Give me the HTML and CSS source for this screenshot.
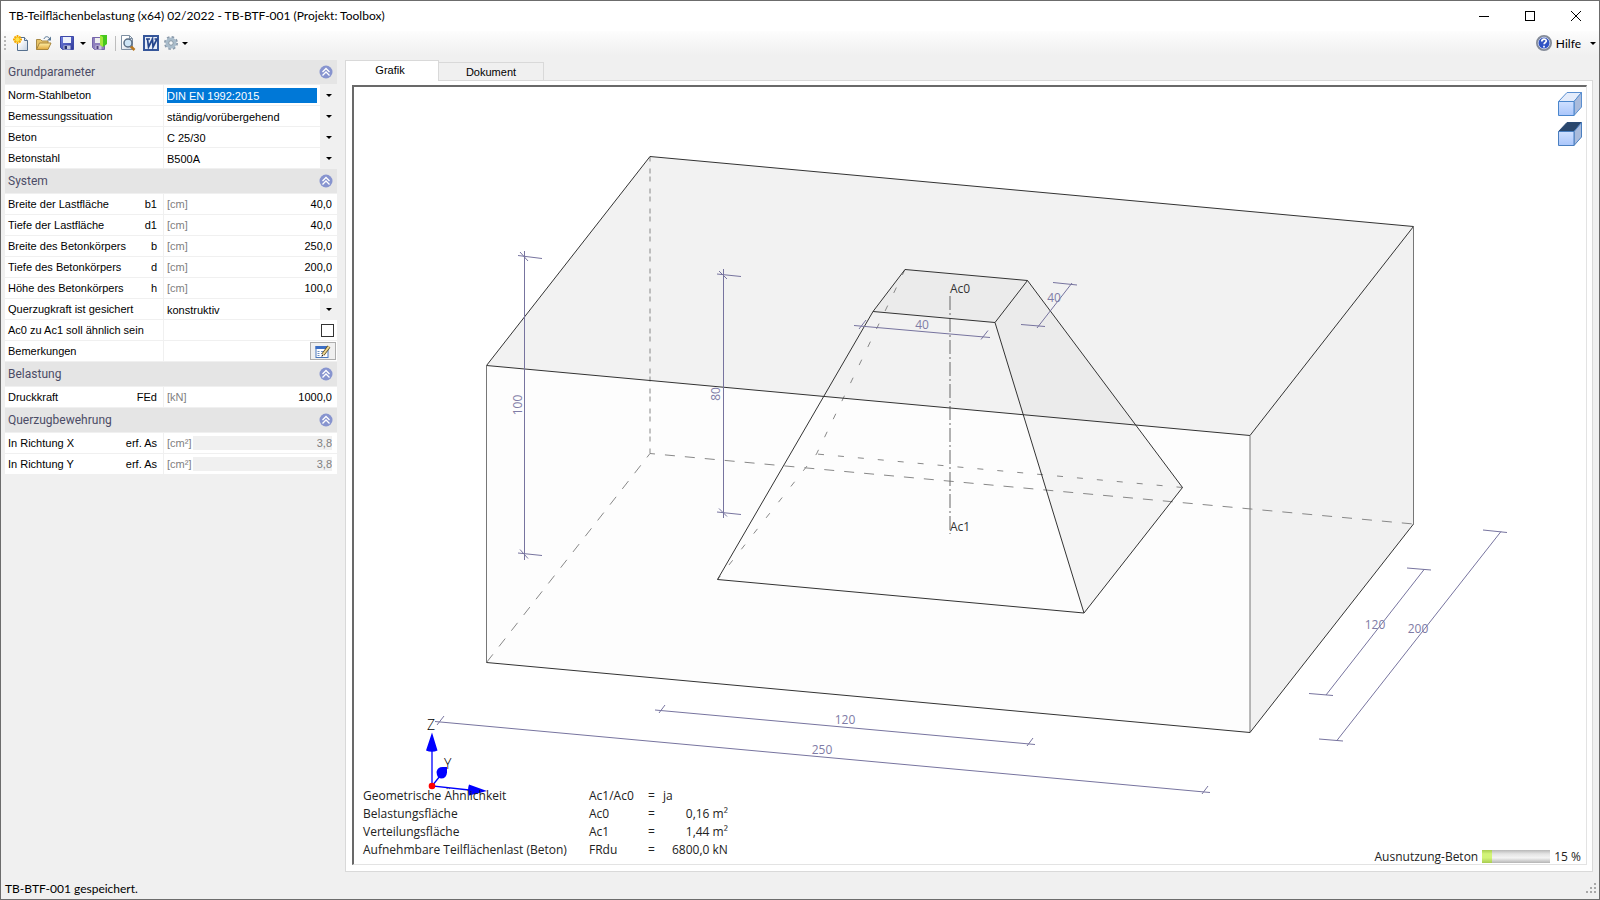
FILE: index.html
```
<!DOCTYPE html>
<html lang="de">

<head>
    <meta charset="UTF-8">
    <meta name="viewport" content="width=device-width, initial-scale=1.0">
    <title>TB-Teilflächenbelastung</title>
    <link rel="stylesheet" href="styles.css">
</head>

<body>
    <div class="window">
        <header class="titlebar">
            <h1 class="title">TB-Teilflächenbelastung (x64) 02/2022 - TB-BTF-001 (Projekt: Toolbox)</h1>
            <div class="window-buttons">
                <button class="window-button" aria-label="Minimieren">
                    <svg width="10" height="10" shape-rendering="crispEdges"><path d="M0 5.500h10" stroke="#000"/></svg>
                </button>
                <button class="window-button" aria-label="Maximieren">
                    <svg width="10" height="10" shape-rendering="crispEdges"><rect x=".5" y=".5" width="9" height="9" fill="none" stroke="#000"/></svg>
                </button>
                <button class="window-button" aria-label="Schließen">
                    <svg width="10" height="10"><path d="M0 0l10 10M10 0L0 10" stroke="#000"/></svg>
                </button>
            </div>
        </header>

        <nav class="toolbar">
            <span class="grip"></span>
            <button class="tool" aria-label="Neu">
                <svg width="16" height="16">
                    <defs>
                        <linearGradient id="page" x2="1" y2="1"><stop offset=".3" stop-color="#fff"/><stop offset="1" stop-color="#c3d0e0"/></linearGradient>
                    </defs>
                    <path d="M4.500 2.500h7l3 3v10h-10z" fill="url(#page)" stroke="#56708f"/>
                    <path d="M11.500 2.500v3h3" fill="#dfe8f2" stroke="#56708f"/>
                    <path d="M4.500 0v9M0 4.500h9M1.500 1.500l6 6M7.500 1.500l-6 6" stroke="#f5a800" stroke-width="1.800"/>
                    <circle cx="4.500" cy="4.500" r="2.200" fill="#ffe24a"/>
                </svg>
            </button>
            <button class="tool" aria-label="Öffnen">
                <svg width="17" height="16">
                    <defs>
                        <linearGradient id="folder" x2="0" y2="1"><stop offset="0" stop-color="#fff0a8"/><stop offset="1" stop-color="#e0a83c"/></linearGradient>
                    </defs>
                    <path d="M1.500 14.500v-10h4l1.500 1.500h6v2" fill="#e8c468" stroke="#a88a45"/>
                    <path d="M1.500 14.500l3-6.500h11.500l-3 6.500z" fill="url(#folder)" stroke="#a8853a"/>
                    <path d="M9 4c1-3 4-3 5.500-.500" fill="none" stroke="#5a7896"/>
                    <path d="M16 1.500v4h-4z" fill="#5a7896"/>
                </svg>
            </button>
            <button class="tool" aria-label="Speichern">
                <svg width="14" height="16">
                    <defs>
                        <linearGradient id="disk" x2="1" y2="1"><stop offset="0" stop-color="#7384e4"/><stop offset="1" stop-color="#2c3596"/></linearGradient>
                    </defs>
                    <path d="M.5 1.500h13v13h-11l-2-2z" fill="url(#disk)" stroke="#3d48a8"/>
                    <path d="M3 2h8v6h-8z" fill="#eef2fb"/>
                    <path d="M3.500 10.500h7v4h-7z" fill="#c4cbe0"/>
                    <path d="M4.500 11h2.500v3h-2.500z" fill="#26306e"/>
                </svg>
            </button>
            <button class="tool-arrow" aria-label="Speichern, weitere"><span class="arrow"></span></button>
            <button class="tool" aria-label="Speichern und schließen">
                <svg width="15" height="16">
                    <path d="M.5 2.500h12v12h-10l-2-2z" fill="#8f80bd" stroke="#7565aa"/>
                    <path d="M3 3h7v5h-7z" fill="#eee"/>
                    <path d="M3.500 10.500h6v4h-6z" fill="#ccc6df"/>
                    <path d="M4.500 11h2v3h-2z" fill="#50407e"/>
                    <path d="M8 0h7v9l-4 3-1-2H8z" fill="#46c81e"/>
                    <path d="M8 0l3 2v10l-3-2z" fill="#a4e83c"/>
                </svg>
            </button>
            <span class="separator"></span>
            <button class="tool" aria-label="Vorschau">
                <svg width="16" height="16">
                    <path d="M1.500.5h8l3 3v11h-11z" fill="url(#page)" stroke="#7f90a3"/>
                    <path d="M9.500.5v3h3" fill="none" stroke="#7f90a3"/>
                    <path d="M10.500 11l4 4" stroke="#b87820" stroke-width="2.500"/>
                    <circle cx="8" cy="8" r="4" fill="#cfe6f7" stroke="#5b6f86" stroke-width="1.500"/>
                </svg>
            </button>
            <button class="tool" aria-label="Word">
                <svg width="16" height="16">
                    <rect x="1" y="1" width="14" height="14" fill="#e8eef8" stroke="#35569a" stroke-width="2"/>
                    <path d="M3 4h4M8.500 4h1.500M11.500 4h3M4.500 4l1 8 4-8 .5 8 4-8" fill="none" stroke="#24458c" stroke-width="1.700"/>
                </svg>
            </button>
            <button class="tool compact" aria-label="Einstellungen">
                <svg width="14" height="16">
                    <circle cx="7" cy="8" r="6" fill="none" stroke="#8a9aab" stroke-width="2" stroke-dasharray="2.500 2.200"/>
                    <circle cx="7" cy="8" r="4" fill="none" stroke="#a9bccb" stroke-width="3"/>
                    <circle cx="7" cy="8" r="2.300" fill="#f3f6f8" stroke="#7d909f"/>
                </svg>
            </button>
            <button class="tool-arrow" aria-label="Einstellungen, weitere"><span class="arrow"></span></button>
            <button class="help">
                <svg width="16" height="16">
                    <defs>
                        <linearGradient id="ball" x2="0" y2="1"><stop offset="0" stop-color="#3455b8"/><stop offset="1" stop-color="#2a50cc"/></linearGradient>
                    </defs>
                    <circle cx="8" cy="8" r="7" fill="url(#ball)" stroke="#848b98" stroke-width="2"/>
                    <circle cx="8" cy="8" r="5.800" fill="none" stroke="#d4dcf0" stroke-width=".8"/>
                    <path d="M5.800 6.500c0-3 4.500-3 4.500-.5 0 1.500-2.200 1.500-2.200 3.300M8 10.800v1.700" fill="none" stroke="#fff" stroke-width="1.700"/>
                </svg>
                Hilfe
                <span class="arrow"></span>
            </button>
        </nav>

        <div class="content">
            <form class="params">
                <section class="group">
                    <h2 class="group-title">Grundparameter
                        <button type="button" class="collapse" aria-label="Einklappen"><svg width="14" height="14"><use href="#chevrons"/></svg></button>
                    </h2>
                    <div class="row">
                        <label class="name" for="norm">Norm-Stahlbeton</label>
                        <div class="value"><select id="norm" class="combo selected"><option>DIN EN 1992:2015</option></select><span class="drop"><span class="arrow"></span></span></div>
                    </div>
                    <div class="row">
                        <label class="name" for="situation">Bemessungssituation</label>
                        <div class="value"><select id="situation" class="combo"><option>ständig/vorübergehend</option></select><span class="drop"><span class="arrow"></span></span></div>
                    </div>
                    <div class="row">
                        <label class="name" for="beton">Beton</label>
                        <div class="value"><select id="beton" class="combo"><option>C 25/30</option></select><span class="drop"><span class="arrow"></span></span></div>
                    </div>
                    <div class="row">
                        <label class="name" for="stahl">Betonstahl</label>
                        <div class="value"><select id="stahl" class="combo"><option>B500A</option></select><span class="drop"><span class="arrow"></span></span></div>
                    </div>
                </section>

                <section class="group">
                    <h2 class="group-title">System
                        <button type="button" class="collapse" aria-label="Einklappen"><svg width="14" height="14"><use href="#chevrons"/></svg></button>
                    </h2>
                    <div class="row">
                        <label class="name" for="b1">Breite der Lastfläche <span>b1</span></label>
                        <div class="value"><span class="unit">[cm]</span><input id="b1" class="number" value="40,0"></div>
                    </div>
                    <div class="row">
                        <label class="name" for="d1">Tiefe der Lastfläche <span>d1</span></label>
                        <div class="value"><span class="unit">[cm]</span><input id="d1" class="number" value="40,0"></div>
                    </div>
                    <div class="row">
                        <label class="name" for="b">Breite des Betonkörpers <span>b</span></label>
                        <div class="value"><span class="unit">[cm]</span><input id="b" class="number" value="250,0"></div>
                    </div>
                    <div class="row">
                        <label class="name" for="d">Tiefe des Betonkörpers <span>d</span></label>
                        <div class="value"><span class="unit">[cm]</span><input id="d" class="number" value="200,0"></div>
                    </div>
                    <div class="row">
                        <label class="name" for="h">Höhe des Betonkörpers <span>h</span></label>
                        <div class="value"><span class="unit">[cm]</span><input id="h" class="number" value="100,0"></div>
                    </div>
                    <div class="row">
                        <label class="name" for="querzug">Querzugkraft ist gesichert</label>
                        <div class="value"><select id="querzug" class="combo"><option>konstruktiv</option></select><span class="drop"><span class="arrow"></span></span></div>
                    </div>
                    <div class="row">
                        <label class="name" for="similar">Ac0 zu Ac1 soll ähnlich sein</label>
                        <div class="value"><input id="similar" type="checkbox" class="check"></div>
                    </div>
                    <div class="row">
                        <label class="name" for="notes">Bemerkungen</label>
                        <div class="value">
                            <button type="button" id="notes" class="notes" aria-label="Bemerkungen bearbeiten">
                                <svg width="16" height="13">
                                    <rect x="1" y="1.500" width="12" height="11" fill="#fff" stroke="#4b78bd"/>
                                    <path d="M.5 1h13v3h-13z" fill="#3d6fc4"/>
                                    <path d="M2.500 6.500h2M2.500 8.500h2M2.500 10.500h2M6 6.500h3M6 8.500h2" stroke="#6f8fc0"/>
                                    <path d="M14 1.500l-6 8" stroke="#5b4a20" stroke-width="3.500"/>
                                    <path d="M14 1.500l-6 8" stroke="#f0d890" stroke-width="2"/>
                                    <path d="M8.500 10.500l-2 1.500.5-2.500z" fill="#222"/>
                                </svg>
                            </button>
                        </div>
                    </div>
                </section>

                <section class="group">
                    <h2 class="group-title">Belastung
                        <button type="button" class="collapse" aria-label="Einklappen"><svg width="14" height="14"><use href="#chevrons"/></svg></button>
                    </h2>
                    <div class="row">
                        <label class="name" for="fed">Druckkraft <span>FEd</span></label>
                        <div class="value"><span class="unit">[kN]</span><input id="fed" class="number" value="1000,0"></div>
                    </div>
                </section>

                <section class="group">
                    <h2 class="group-title">Querzugbewehrung
                        <button type="button" class="collapse" aria-label="Einklappen"><svg width="14" height="14"><use href="#chevrons"/></svg></button>
                    </h2>
                    <div class="row">
                        <label class="name" for="asx">In Richtung X <span>erf. As</span></label>
                        <div class="value"><span class="unit">[cm²]</span><input id="asx" class="number readonly" value="3,8" readonly></div>
                    </div>
                    <div class="row">
                        <label class="name" for="asy">In Richtung Y <span>erf. As</span></label>
                        <div class="value"><span class="unit">[cm²]</span><input id="asy" class="number readonly" value="3,8" readonly></div>
                    </div>
                </section>
            </form>

            <main class="main">
                <div class="tabs" role="tablist">
                    <button class="tab active" role="tab" aria-selected="true">Grafik</button>
                    <button class="tab" role="tab" aria-selected="false">Dokument</button>
                </div>
                <div class="panel">
                    <div class="canvas">
                        <svg class="drawing" viewBox="354 87 1232 777">
                            <defs>
                                <symbol id="chevrons" viewBox="0 0 14 14">
                                    <circle cx="7" cy="7" r="6.500" fill="#8794cf"/>
                                    <path d="M3.500 7L7 3.500 10.500 7M3.500 10.500L7 7l3.500 3.500" fill="none" stroke="#fff" stroke-width="1.300"/>
                                </symbol>
                            </defs>

                            <!-- concrete block -->
                            <path d="M486.500 365.500L1250 435.500V732.500L486.500 662.500z" fill="#fdfdfd"/>
                            <path d="M650 156.500L1413.500 226.500 1250 435.500 486.500 365.500z" fill="#f2f2f2"/>
                            <path d="M1413.500 226.500V524L1250 732.500V435.500z" fill="#f1f1f1"/>

                            <!-- load distribution body -->
                            <path d="M905 269.500L1027.500 280.500 995 322.500 873 311.500z" fill="#ebebeb"/>
                            <path d="M1027.500 280.500L1135 425 1024 415 995 322.500z" fill="#ebebeb"/>
                            <path d="M1135 425L1182.500 487.500 1084 613 1024 415z" fill="#f4f4f4"/>

                            <g class="hidden-edge">
                                <path d="M650 156.500V453.500" stroke-dasharray="5 3 5 7" stroke-dashoffset="8"/>
                                <path d="M650 453.500L1413.500 524M650 453.500L486.500 662.500" stroke-dasharray="10 10" stroke-dashoffset="5"/>
                                <path d="M1182.500 487.500L816.500 454M905 269.500L816.500 454L717.500 579.500" stroke-dasharray="6 14"/>
                                <path class="axis" d="M950 296V534" stroke-dasharray="14 3 2 3"/>
                            </g>

                            <g class="edge">
                                <path d="M650 156.500L1413.500 226.500 1250 435.500 486.500 365.500z"/>
                                <path class="upright" d="M486.500 365.500V662.500M1250 435.500V732.500M1413.500 226.500V524"/>
                                <path d="M486.500 662.500L1250 732.500 1413.500 524"/>
                                <path d="M905 269.500L1027.500 280.500 995 322.500 873 311.500z"/>
                                <path d="M873 311.500L717.500 579.500 1084 613 1182.500 487.500 1027.500 280.500M995 322.500L1084 613"/>
                            </g>

                            <g class="dimension">
                                <path d="M524.500 251V560M518 255.500L542 258.500M520 252l8 9M518 553L542 555.500M520 549.500l8 9"/>
                                <path d="M723.500 269V518M717 274L741 276.500M719 271l8 8M717 512L741 514.500M719 508.500l8 8"/>
                                <path d="M854 325.500L990 337.500M859 329l7-9M981 339.500l7-9"/>
                                <path d="M1037 328L1072 283M1021 324.500L1045 326.500M1053 282.500L1077 285"/>
                                <path d="M1424.500 569L1326 695M1407 568L1431 570M1309 693.500L1333 695.500"/>
                                <path d="M1501 531.500L1336.500 741M1483 530L1507 532.500M1319 739L1343 741"/>
                                <path d="M655 710L1035 744.500M659 713l6-8M1027 746l6-8"/>
                                <path d="M435 721.500L1210 792.500M437 725l7-9M1202 794l6-8"/>
                            </g>
                            <g class="dimension-text">
                                <text transform="translate(522 405) rotate(-90)">100</text>
                                <text transform="translate(720 394) rotate(-90)">80</text>
                                <text x="922" y="329">40</text>
                                <text x="1054" y="302">40</text>
                                <text x="1375" y="629">120</text>
                                <text x="1418" y="633">200</text>
                                <text x="845" y="724">120</text>
                                <text x="822" y="754">250</text>
                            </g>
                            <g class="label-text">
                                <text x="950" y="293">Ac0</text>
                                <text x="950" y="531">Ac1</text>
                            </g>
                            <g class="axis-text">
                                <text x="427" y="730">Z</text>
                                <text x="444" y="769">Y</text>
                            </g>

                            <!-- coordinate axes -->
                            <path d="M432 750V786L469 790M432 786L440 776" fill="none" stroke="#00f" stroke-width="1.300"/>
                            <path d="M432 732.500L437.500 750.500Q432 753 426 750.500zM487 791L469 795.500Q467 790 469 784.500z" fill="#00f"/>
                            <path d="M436.500 772q1-5 6-5h4.500v5.500q-.5 6-6 6-4 0-4.500-6.500z" fill="#00f"/>
                            <circle cx="432" cy="786" r="3.300" fill="#f00"/>
                        </svg>

                        <div class="views">
                            <button class="view" aria-label="3D-Ansicht">
                                <svg width="24" height="24">
                                    <defs>
                                        <linearGradient id="front" x2="0" y2="1"><stop offset="0" stop-color="#cfe0ff"/><stop offset="1" stop-color="#aac6fb"/></linearGradient>
                                    </defs>
                                    <path d="M.5 9.500L9 .5h14.500L16 9.500z" fill="#e4ecfb" stroke="#5a8fd0"/>
                                    <path d="M16 9.500L23.500.5V15L16 23.500z" fill="#a9bbdc" stroke="#5a8fd0"/>
                                    <path d="M.5 9.500H16v14H.5z" fill="url(#front)" stroke="#4a86cc"/>
                                </svg>
                            </button>
                            <button class="view" aria-label="Draufsicht">
                                <svg width="24" height="24">
                                    <path d="M.5 9.500L9 .5h14.500L16 9.500z" fill="#2a476c" stroke="#2a4a74"/>
                                    <path d="M16 9.500L23.500.5V15L16 23.500z" fill="#a9bbdc" stroke="#4a7fc0"/>
                                    <path d="M.5 9.500H16v14H.5z" fill="url(#front)" stroke="#4a7fc0"/>
                                </svg>
                            </button>
                        </div>

                        <table class="results">
                            <tr><td>Geometrische Ähnlichkeit</td><td>Ac1/Ac0</td><td>=</td><td class="answer">ja</td></tr>
                            <tr><td>Belastungsfläche</td><td>Ac0</td><td>=</td><td>0,16 m²</td></tr>
                            <tr><td>Verteilungsfläche</td><td>Ac1</td><td>=</td><td>1,44 m²</td></tr>
                            <tr><td>Aufnehmbare Teilflächenlast (Beton)</td><td>FRdu</td><td>=</td><td>6800,0 kN</td></tr>
                        </table>

                        <div class="usage">
                            <span id="usage-label">Ausnutzung-Beton</span>
                            <div class="bar" role="progressbar" aria-labelledby="usage-label" aria-valuenow="15"><div class="fill" style="width: 15%"></div></div>
                            <span>15 %</span>
                        </div>
                    </div>
                </div>
            </main>
        </div>

        <footer class="statusbar">
            <span>TB-BTF-001 gespeichert.</span>
            <svg width="11" height="11" fill="#a8a8a8" shape-rendering="crispEdges">
                <path d="M8 0h2v2h-2zM4 4h2v2h-2zM8 4h2v2h-2zM0 8h2v2h-2zM4 8h2v2h-2zM8 8h2v2h-2z"/>
            </svg>
        </footer>
    </div>
</body>

</html>
```
FILE: styles.css
```
* {
    box-sizing: border-box;
}

body {
    margin: 0;
    font-family: Lato, sans-serif;
    font-size: 12px;
    color: #000;
}

button,
input,
select {
    font: inherit;
    color: inherit;
    margin: 0;
    padding: 0;
    border: 0;
    background: none;
    border-radius: 0;
}

svg {
    display: block;
}

.window {
    display: flex;
    flex-direction: column;
    height: 100vh;
    background-color: #f0f0f0;
    border: 1px solid #6c6c6c;
}

/* title bar and toolbar */
.titlebar {
    display: flex;
    justify-content: space-between;
    height: 30px;
    background-color: #fff;
}

.title {
    margin: 0;
    padding-left: 8px;
    font-size: 12px;
    font-weight: 400;
    line-height: 30px;
}

.window-buttons {
    display: flex;
}

.window-button {
    display: flex;
    justify-content: center;
    align-items: center;
    width: 46px;
}

.toolbar {
    display: flex;
    align-items: center;
    height: 24px;
    padding-left: 3px;
    background: linear-gradient(#fdfdfd, #f0f0f0);
}

.grip {
    width: 2px;
    height: 15px;
    margin-right: 3px;
    background: repeating-linear-gradient(#b8b8b8 0 2px, transparent 2px 4px);
}

.tool {
    display: flex;
    justify-content: center;
    width: 23px;
}

.tool.compact {
    width: 18px;
}

.tool-arrow {
    display: flex;
    justify-content: center;
    width: 10px;
}

.arrow {
    border: 3px solid transparent;
    border-top-color: #000;
    border-bottom: 0;
}

.separator {
    width: 1px;
    height: 15px;
    margin-left: 4px;
    background-color: #bdbdbd;
}

.help {
    display: flex;
    align-items: center;
    gap: 4px;
    margin-left: auto;
    padding-right: 3px;
}

.help .arrow {
    margin-left: 5px;
}

/* parameter list */
.content {
    display: flex;
    flex: 1;
    gap: 8px;
    min-height: 0;
    padding: 5px 6px 0 4px;
}

.params {
    width: 332px;
    font-family: "Liberation Sans", Arial, sans-serif;
    font-size: 11px;
}

.group-title {
    display: flex;
    justify-content: space-between;
    align-items: center;
    height: 24px;
    margin: 0 0 1px;
    padding: 0 4px 0 3px;
    background-color: #e5e5e5;
    color: #4c4c66;
    font-family: Roboto, sans-serif;
    font-size: 12px;
    font-weight: 400;
}

.row {
    display: flex;
    gap: 1px;
    height: 20px;
    margin-bottom: 1px;
}

.name {
    display: flex;
    justify-content: space-between;
    align-items: center;
    width: 158px;
    padding: 0 6px 0 3px;
    background-color: #fff;
}

.value {
    display: flex;
    flex: 1;
    justify-content: flex-end;
    align-items: center;
    padding-left: 3px;
    background-color: #fff;
}

.combo {
    flex: 1;
    height: 15px;
    margin-right: 3px;
    padding-top: 1px;
    appearance: none;
    line-height: 14px;
}

.combo.selected {
    background-color: #0078d7;
    color: #fff;
}

.drop {
    display: flex;
    justify-content: center;
    align-items: center;
    width: 17px;
    height: 20px;
    background-color: #f0f0f0;
}

.unit {
    color: #808080;
}

.number {
    flex: 1;
    width: 0;
    height: 14px;
    margin: 0 5px 0 2px;
    text-align: right;
}

.number.readonly {
    background-color: #f0f0f0;
    color: #808080;
}

.check {
    width: 13px;
    height: 13px;
    margin-right: 3px;
    appearance: none;
    border: 1px solid #333;
}

.notes {
    display: flex;
    justify-content: center;
    align-items: center;
    width: 26px;
    height: 18px;
    margin-right: 1px;
    border: 1px solid #adadad;
    background-color: #f0f0f0;
}

/* drawing area */
.main {
    display: flex;
    flex: 1;
    flex-direction: column;
}

.tabs {
    display: flex;
    align-items: flex-end;
    height: 21px;
    margin-bottom: -1px;
    font-family: "Liberation Sans", Arial, sans-serif;
    font-size: 11px;
}

.tab {
    width: 105px;
    height: 19px;
    border: 1px solid #d9d9d9;
    border-left: 0;
}

.tab.active {
    position: relative;
    width: 94px;
    height: 21px;
    padding: 0 4px 2px 0;
    border-left: 1px solid #d9d9d9;
    border-bottom: 0;
    background-color: #fff;
}

.panel {
    display: flex;
    flex: 1;
    padding: 4px 5px 6px 6px;
    border: 1px solid #d9d9d9;
    background-color: #fff;
}

.canvas {
    position: relative;
    flex: 1;
    border: 2px solid #696969;
    border-right: 1px solid #e3e3e3;
    border-bottom: 1px solid #e3e3e3;
    color: #222;
    font-family: "Open Sans", sans-serif;
}

.drawing {
    position: absolute;
    width: 100%;
    height: 100%;
}

.edge {
    fill: none;
    stroke: #333;
}

.edge .upright {
    stroke: #777;
}

.hidden-edge {
    fill: none;
    stroke: #888;
}

.hidden-edge .axis {
    stroke: #666;
}

.dimension {
    fill: none;
    stroke: #77749f;
}

.dimension-text {
    fill: #7f7ca6;
    text-anchor: middle;
}

.label-text {
    fill: #333;
}

.axis-text {
    font-size: 14px;
    font-weight: 300;
}

.views {
    position: absolute;
    top: 5px;
    right: 4px;
    display: grid;
    gap: 6px;
}

.results {
    position: absolute;
    left: 9px;
    bottom: 5px;
    border-collapse: collapse;
}

.results td {
    height: 18px;
    padding: 0;
    line-height: 18px;
}

.results td:nth-child(1) {
    width: 226px;
}

.results td:nth-child(2) {
    width: 59px;
}

.results td:nth-child(4) {
    width: 73px;
    text-align: right;
}

.results td.answer {
    padding-left: 8px;
    text-align: left;
}

.usage {
    position: absolute;
    right: 5px;
    bottom: 0;
    display: flex;
    align-items: center;
    gap: 4px;
    line-height: 15px;
}

.bar {
    width: 68px;
    height: 13px;
    background: linear-gradient(#b8b8b8, #e4e4e4 30%, #f4f4f4 60%, #b4b4b4);
}

.fill {
    height: 100%;
    background: linear-gradient(#a8cc50, #d2f478 30%, #d2f478 60%, #a8cc50);
}

.statusbar {
    display: flex;
    justify-content: space-between;
    align-items: center;
    height: 27px;
    padding: 6px 2px 0 4px;
}
```
